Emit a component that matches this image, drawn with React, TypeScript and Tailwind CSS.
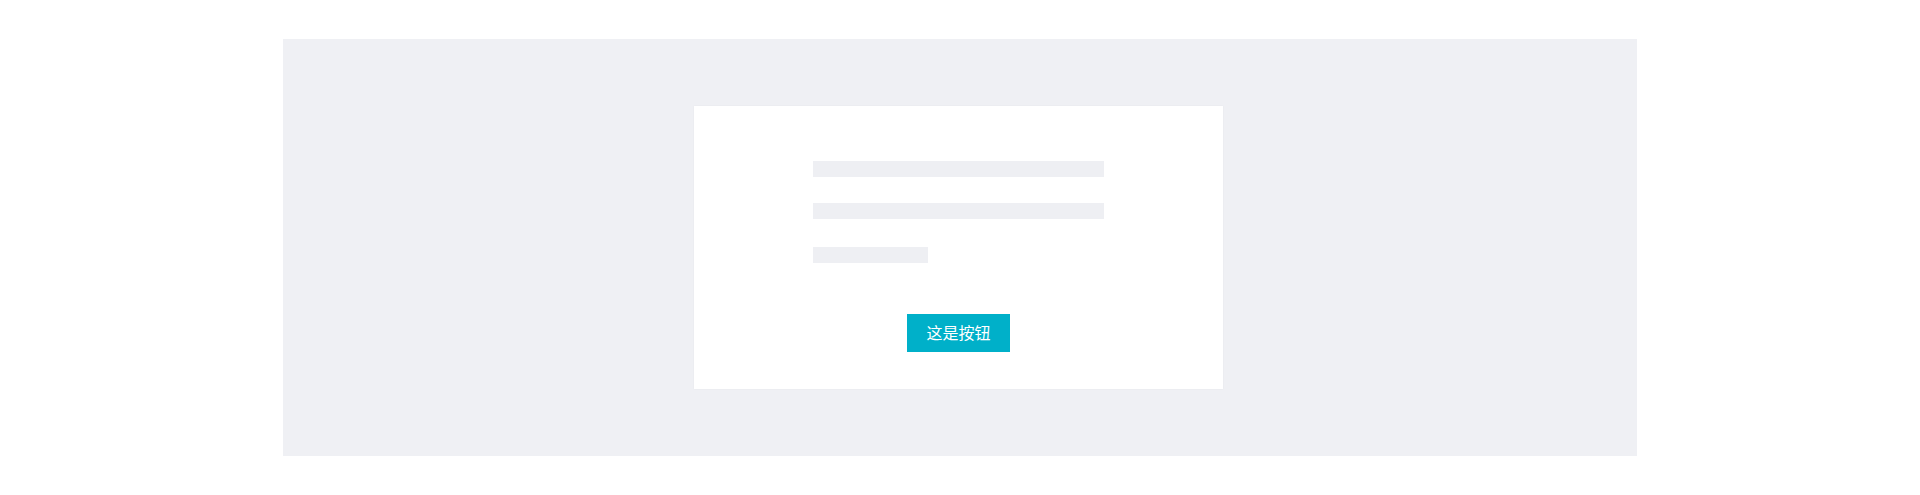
export default function App() {
  return (
    <div className="w-full h-[495px] bg-white pt-[39px]" style={{ fontFamily: '"Noto Sans", "Noto Sans CJK SC", sans-serif' }}>
      <div className="mx-auto w-[1354px] h-[417px] bg-[#eff0f4] pt-[67px]">
        <div className="ml-[411px] w-[529px] h-[283px] bg-white shadow-[0_0_2px_rgba(0,0,0,0.04)] pt-[55px] px-[119px] flex flex-col">
          <div className="h-[16px] w-[291px] bg-[#eeeff3]" />
          <div className="h-[16px] w-[291px] bg-[#eeeff3] mt-[26px]" />
          <div className="h-[16px] w-[115px] bg-[#eeeff3] mt-[28px]" />
          <div className="flex justify-center mt-[51px]">
            <button className="w-[103px] h-[38px] bg-[#00b0c9] text-white text-[16px] leading-none flex items-center justify-center">
              这是按钮
            </button>
          </div>
        </div>
      </div>
    </div>
  );
}
